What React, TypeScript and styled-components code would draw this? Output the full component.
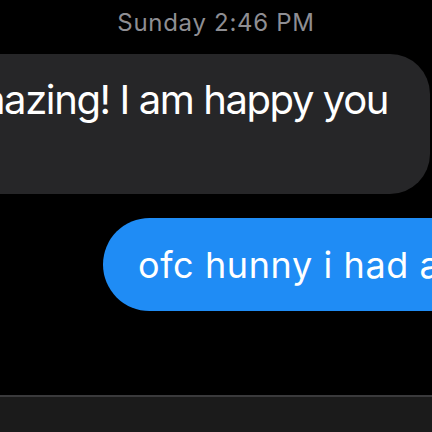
import React from "react";
import styled, { createGlobalStyle } from "styled-components";

const GlobalStyle = createGlobalStyle`
  html, body {
    margin: 0;
    padding: 0;
    background: #000;
  }
`;

const Screen = styled.div`
  width: 432px;
  height: 432px;
  overflow: hidden;
  display: flex;
  flex-direction: column;
  background: #000;
  font-family: Inter, "Liberation Sans", sans-serif;
`;

const Timestamp = styled.div`
  margin-top: 8px;
  text-align: center;
  font-size: 24px;
  line-height: 29px;
  color: #8e8e93;
  letter-spacing: 0.7px;
`;

const Row = styled.div<{ $outgoing?: boolean }>`
  display: flex;
  justify-content: ${(p) => (p.$outgoing ? "flex-start" : "flex-end")};
  margin-top: ${(p) => (p.$outgoing ? "24px" : "17px")};
  padding-right: ${(p) => (p.$outgoing ? "0" : "2px")};
  padding-left: ${(p) => (p.$outgoing ? "103px" : "0")};
`;

const Bubble = styled.div<{ $outgoing?: boolean }>`
  flex-shrink: 0;
  white-space: nowrap;
  color: #fff;
  background: ${(p) => (p.$outgoing ? "#1f8cf5" : "#262628")};
  border-radius: ${(p) => (p.$outgoing ? "47px" : "40px")};
  font-size: ${(p) => (p.$outgoing ? "36px" : "40px")};
  line-height: ${(p) => (p.$outgoing ? "44px" : "48px")};
  letter-spacing: ${(p) => (p.$outgoing ? "0.6px" : "-1.4px")};
  padding: ${(p) => (p.$outgoing ? "25px 40px 24px 35px" : "22px 42px 70px 40px")};
`;

const Composer = styled.div`
  margin-top: auto;
  height: 35px;
  border-top: 2px solid #3a3a3c;
  background: #1b1b1b;
`;

export default function App() {
  return (
    <Screen>
      <GlobalStyle />
      <Timestamp>Sunday 2:46 PM</Timestamp>
      <Row>
        <Bubble>That is amazing! I am happy you</Bubble>
      </Row>
      <Row $outgoing>
        <Bubble $outgoing>ofc hunny i had a great time</Bubble>
      </Row>
      <Composer />
    </Screen>
  );
}
